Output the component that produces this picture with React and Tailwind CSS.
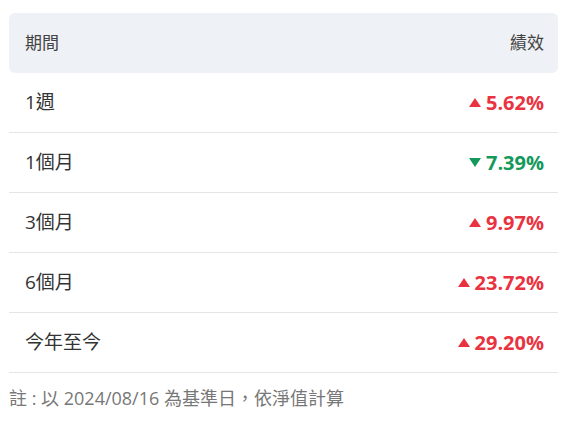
import React from "react";

const rows = [
    { period: "1週", value: "5.62%", up: true },
    { period: "1個月", value: "7.39%", up: false },
    { period: "3個月", value: "9.97%", up: true },
    { period: "6個月", value: "23.72%", up: true },
    { period: "今年至今", value: "29.20%", up: true },
];

function Arrow({ up }) {
    return (
        <svg width="12" height="9" viewBox="0 0 12 9" className="mr-[5px]">
            {up ? (
                <polygon points="6,0 12,9 0,9" fill="currentColor" />
            ) : (
                <polygon points="0,0 12,0 6,9" fill="currentColor" />
            )}
        </svg>
    );
}

export default function App() {
    return (
        <div
            className="w-[571px] h-[432px] bg-white pt-[13px] pl-[9px] text-[#333]"
            style={{ fontFamily: '"Open Sans", "Noto Sans CJK TC", sans-serif' }}
        >
            <div className="w-[549px]">
                {/* header */}
                <div className="flex items-center justify-between h-[60px] pl-4 pr-[14px] rounded-md bg-[#eef1f5] text-[17px] text-[#444]">
                    <span>期間</span>
                    <span>績效</span>
                </div>

                {rows.map((r) => (
                    <div
                        key={r.period}
                        className="flex items-center justify-between h-[60px] pl-4 pr-[14px] border-b border-[#e5e5e5] text-[19px]"
                    >
                        <span className="text-[#333]">{r.period}</span>
                        <span
                            className={`flex items-center font-bold text-[20px] ${
                                r.up ? "text-[#ea3340]" : "text-[#14995b]"
                            }`}
                        >
                            <Arrow up={r.up} />
                            {r.value}
                        </span>
                    </div>
                ))}

                <p className="mt-[12px] text-[18px] text-[#777]">
                    註 : 以 2024/08/16 為基準日，依淨值計算
                </p>
            </div>
        </div>
    );
}
